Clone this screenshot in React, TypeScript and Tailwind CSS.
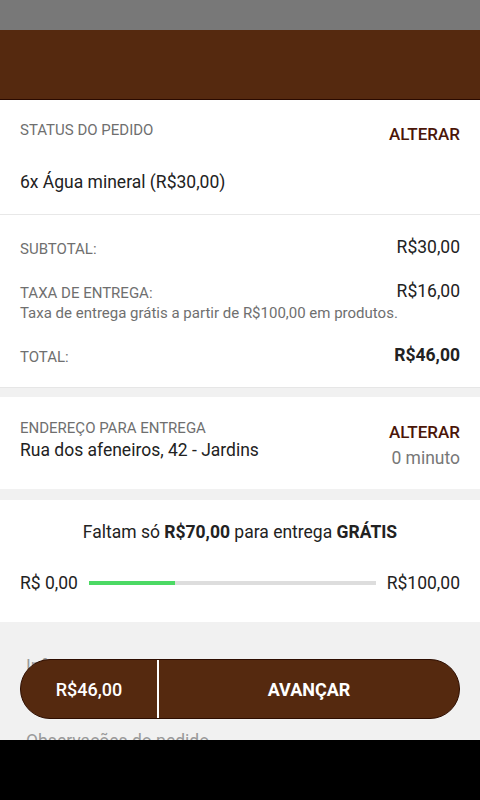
import React from "react";

const font = { fontFamily: "Roboto, 'Noto Sans', sans-serif" };

function Row({ label, value, bold }: { label: string; value: string; bold?: boolean }) {
  return (
    <div className="flex justify-between items-start">
      <span className="mt-1 text-[15px] leading-5 text-[#6f6f6f]">{label}</span>
      <span className={`text-[17.5px] leading-6 text-[#222] ${bold ? "font-bold" : ""}`}>{value}</span>
    </div>
  );
}

export default function App() {
  const progress = 30;

  return (
    <div className="w-[480px] h-[800px] flex flex-col bg-[#f1f1f1] overflow-hidden" style={font}>
      {/* status bar */}
      <div className="h-[30px] bg-[#787878]" />
      {/* header */}
      <div className="h-[70px] bg-[#55290f] border-b border-[#2a0a00]" />

      <div className="relative flex-1 overflow-hidden">
        {/* status do pedido */}
        <div className="bg-white px-5 pt-5 pb-5 border-b border-[#e8e8e8]">
          <div className="flex justify-between items-start">
            <span className="text-[15px] leading-5 text-[#6f6f6f]">STATUS DO PEDIDO</span>
            <button className="mt-1 text-[17px] leading-5 font-medium text-[#4a1608]">ALTERAR</button>
          </div>
          <p className="mt-[26px] text-[17.5px] leading-6 text-[#222]">6x Água mineral (R$30,00)</p>
        </div>

        {/* totais */}
        <div className="bg-white px-5 pt-5 pb-5 border-b border-[#e6e6e6]">
          <Row label="SUBTOTAL:" value="R$30,00" />
          <div className="mt-5">
            <Row label="TAXA DE ENTREGA:" value="R$16,00" />
            <p className="mt-[1px] text-[15px] leading-[18px] text-[#6f6f6f]">
              Taxa de entrega grátis a partir de R$100,00 em produtos.
            </p>
          </div>
          <div className="mt-[21px]">
            <Row label="TOTAL:" value="R$46,00" bold />
          </div>
        </div>

        {/* endereço */}
        <div className="mt-[9px] h-[92px] bg-white px-5 pt-[21px] flex justify-between items-start">
          <div className="flex flex-col">
            <span className="text-[15px] leading-5 text-[#6f6f6f]">ENDEREÇO PARA ENTREGA</span>
            <span className="text-[17.5px] leading-6 text-[#222]">Rua dos afeneiros, 42 - Jardins</span>
          </div>
          <div className="flex flex-col items-end">
            <button className="mt-1 text-[17px] leading-5 font-medium text-[#4a1608]">ALTERAR</button>
            <span className="mt-1 text-[17.5px] leading-6 text-[#777]">0 minuto</span>
          </div>
        </div>

        {/* frete grátis */}
        <div className="mt-[11px] bg-white px-5 pt-5 pb-[27px]">
          <p className="text-center text-[17.5px] leading-6 text-[#222]">
            Faltam só <b className="font-bold">R$70,00</b> para entrega <b className="font-bold">GRÁTIS</b>
          </p>
          <div className="mt-[27px] flex items-center gap-[11px]">
            <span className="text-[17.5px] leading-6 text-[#222]">R$ 0,00</span>
            <div className="flex-1 h-1 bg-[#dddddd]">
              <div className="h-1 bg-[#4cd964]" style={{ width: `${progress}%` }} />
            </div>
            <span className="text-[17.5px] leading-6 text-[#222]">R$100,00</span>
          </div>
        </div>

        {/* campos por baixo do botão */}
        <div className="px-[26px] pt-[32px]">
          <p className="text-[17.5px] leading-6 text-[#9a9a9a]">Informe o CPF na nota</p>
          <p className="mt-[51px] text-[17.5px] leading-6 text-[#9a9a9a]">Observações do pedido</p>
        </div>

        {/* botão flutuante */}
        <div className="absolute left-5 right-5 top-[559px] h-[60px] flex rounded-full overflow-hidden border border-[#2d0d00] bg-[#55290f]">
          <div className="w-[136px] flex items-center justify-center text-[18px] font-medium text-white">
            R$46,00
          </div>
          <div className="w-[2px] bg-white" />
          <div className="flex-1 flex items-center justify-center text-[18px] font-bold text-white">
            AVANÇAR
          </div>
        </div>
      </div>

      {/* barra de navegação */}
      <div className="h-[60px] bg-black" />
    </div>
  );
}
